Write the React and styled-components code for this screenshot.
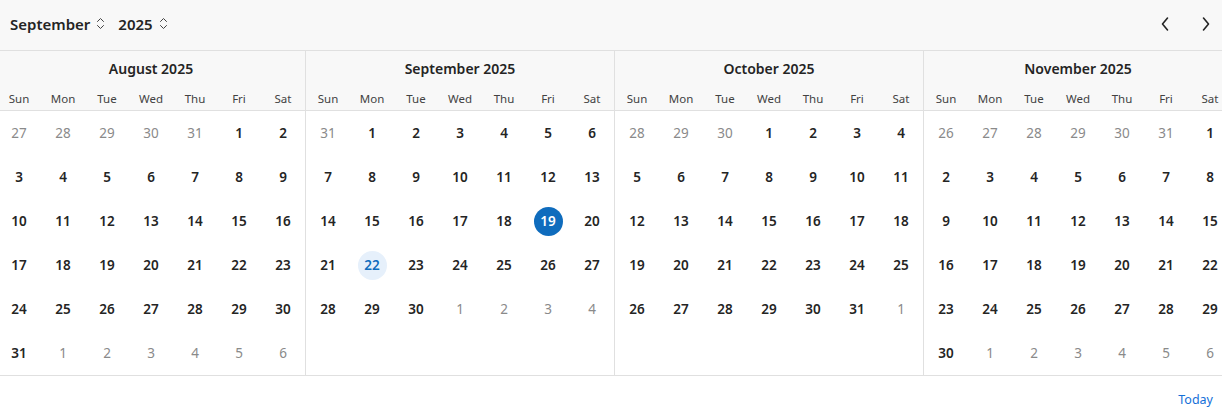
import React from 'react';
import styled, { createGlobalStyle } from 'styled-components';

const GlobalStyle = createGlobalStyle`
  html, body {
    margin: 0;
    padding: 0;
    background: #ffffff;
    overflow: hidden;
  }
  body {
    font-family: "Noto Sans", "Open Sans", sans-serif;
    color: #242424;
  }
`;

const Shell = styled.div`
  width: 1222px;
  display: flex;
  flex-direction: column;
  overflow: hidden;
`;

const Toolbar = styled.header`
  height: 51px;
  display: flex;
  align-items: center;
  justify-content: space-between;
  padding: 0 8px 3px 10px;
  box-sizing: border-box;
  background: #f8f8f8;
  border-bottom: 1px solid #e0e0e0;
`;

const Pickers = styled.div`
  display: flex;
  align-items: center;
  gap: 13px;
`;

const Picker = styled.button`
  display: flex;
  align-items: center;
  gap: 6px;
  border: 0;
  background: none;
  padding: 0;
  font: 600 15px "Noto Sans", "Open Sans", sans-serif;
  color: #242424;
  cursor: pointer;
`;

const NavGroup = styled.div`
  display: flex;
  align-items: center;
  gap: 25px;
`;

const NavButton = styled.button`
  width: 16px;
  height: 20px;
  display: flex;
  align-items: center;
  justify-content: center;
  border: 0;
  background: none;
  padding: 0;
  cursor: pointer;
  color: #242424;
`;

const Months = styled.div`
  display: flex;
  margin-left: -3px;
  border-bottom: 1px solid #e0e0e0;
`;

const MonthPanel = styled.section`
  flex: 0 0 308px;
  display: flex;
  flex-direction: column;
  border-left: ${p => (p.$first ? 'none' : '1px solid #e0e0e0')};
`;

const MonthHead = styled.div`
  background: #f8f8f8;
  border-bottom: 1px solid #e0e0e0;
`;

const MonthTitle = styled.div`
  height: 37px;
  box-sizing: border-box;
  display: flex;
  align-items: center;
  justify-content: center;
  padding-bottom: 2px;
  font-size: 14px;
  font-weight: 600;
`;

const Grid = styled.div`
  display: grid;
  grid-template-columns: repeat(7, 44px);
`;

const WeekDay = styled.div`
  height: 22px;
  box-sizing: border-box;
  display: flex;
  align-items: center;
  justify-content: center;
  padding-bottom: 2px;
  font-size: 11.5px;
  color: #424242;
`;

const Cell = styled.div`
  height: 44px;
  display: flex;
  align-items: center;
  justify-content: center;
`;

const Day = styled.button`
  width: 29px;
  height: 29px;
  border-radius: 50%;
  border: 0;
  padding: 0;
  display: flex;
  align-items: center;
  justify-content: center;
  font-family: "Noto Sans", "Open Sans", sans-serif;
  font-size: 13.5px;
  cursor: pointer;
  font-weight: ${p => (p.$outside ? 400 : 600)};
  color: ${p => (p.$selected ? '#ffffff' : p.$today ? '#0f6cbd' : p.$outside ? '#8a8a8a' : '#242424')};
  background: ${p => (p.$selected ? '#0f6cbd' : p.$today ? '#e6f0fb' : 'transparent')};
`;

const Footer = styled.footer`
  height: 34px;
  display: flex;
  align-items: center;
  justify-content: flex-end;
  padding: 0 9px 0 0;
`;

const TodayLink = styled.button`
  border: 0;
  background: none;
  padding: 0;
  margin-top: 13px;
  font: 400 12.5px "Noto Sans", "Open Sans", sans-serif;
  color: #1570d8;
  cursor: pointer;
`;

const UpDown = () => (
  <svg width="9" height="13" viewBox="0 0 9 13" fill="none" stroke="#424242" strokeWidth="1" strokeLinecap="round" strokeLinejoin="round">
    <path d="M1.5 4.5 4.5 1.5 7.5 4.5" />
    <path d="M1.5 8.5 4.5 11.5 7.5 8.5" />
  </svg>
);

const Chevron = ({ dir }) => (
  <svg width="10" height="16" viewBox="0 0 10 16" fill="none" stroke="#242424" strokeWidth="1.6" strokeLinecap="round" strokeLinejoin="round">
    {dir === 'left' ? <path d="M7.5 2 2.5 8 7.5 14" /> : <path d="M2.5 2 7.5 8 2.5 14" />}
  </svg>
);

const WEEKDAYS = ['Sun', 'Mon', 'Tue', 'Wed', 'Thu', 'Fri', 'Sat'];
const NAMES = ['January', 'February', 'March', 'April', 'May', 'June', 'July', 'August', 'September', 'October', 'November', 'December'];

const buildDays = (year, month) => {
  const first = new Date(year, month, 1);
  const start = new Date(year, month, 1 - first.getDay());
  const last = new Date(year, month + 1, 0);
  const weeks = Math.ceil((first.getDay() + last.getDate()) / 7);
  const days = [];
  for (let i = 0; i < weeks * 7; i++) {
    const d = new Date(start.getFullYear(), start.getMonth(), start.getDate() + i);
    days.push({ key: d.toDateString(), date: d.getDate(), outside: d.getMonth() !== month, m: d.getMonth() });
  }
  return days;
};

const Month = ({ year, month, first }) => (
  <MonthPanel $first={first}>
    <MonthHead>
      <MonthTitle>{NAMES[month]} {year}</MonthTitle>
      <Grid>
        {WEEKDAYS.map(w => <WeekDay key={w}>{w}</WeekDay>)}
      </Grid>
    </MonthHead>
    <Grid>
      {buildDays(year, month).map(d => (
        <Cell key={d.key}>
          <Day
            $outside={d.outside}
            $selected={!d.outside && d.m === 8 && d.date === 19}
            $today={!d.outside && d.m === 8 && d.date === 22}
          >
            {d.date}
          </Day>
        </Cell>
      ))}
    </Grid>
  </MonthPanel>
);

const App = () => (
  <Shell>
    <GlobalStyle />
    <Toolbar>
      <Pickers>
        <Picker>September <UpDown /></Picker>
        <Picker>2025 <UpDown /></Picker>
      </Pickers>
      <NavGroup>
        <NavButton aria-label="Previous"><Chevron dir="left" /></NavButton>
        <NavButton aria-label="Next"><Chevron dir="right" /></NavButton>
      </NavGroup>
    </Toolbar>
    <Months>
      {[7, 8, 9, 10].map((m, i) => <Month key={m} year={2025} month={m} first={i === 0} />)}
    </Months>
    <Footer>
      <TodayLink>Today</TodayLink>
    </Footer>
  </Shell>
);

export default App;
